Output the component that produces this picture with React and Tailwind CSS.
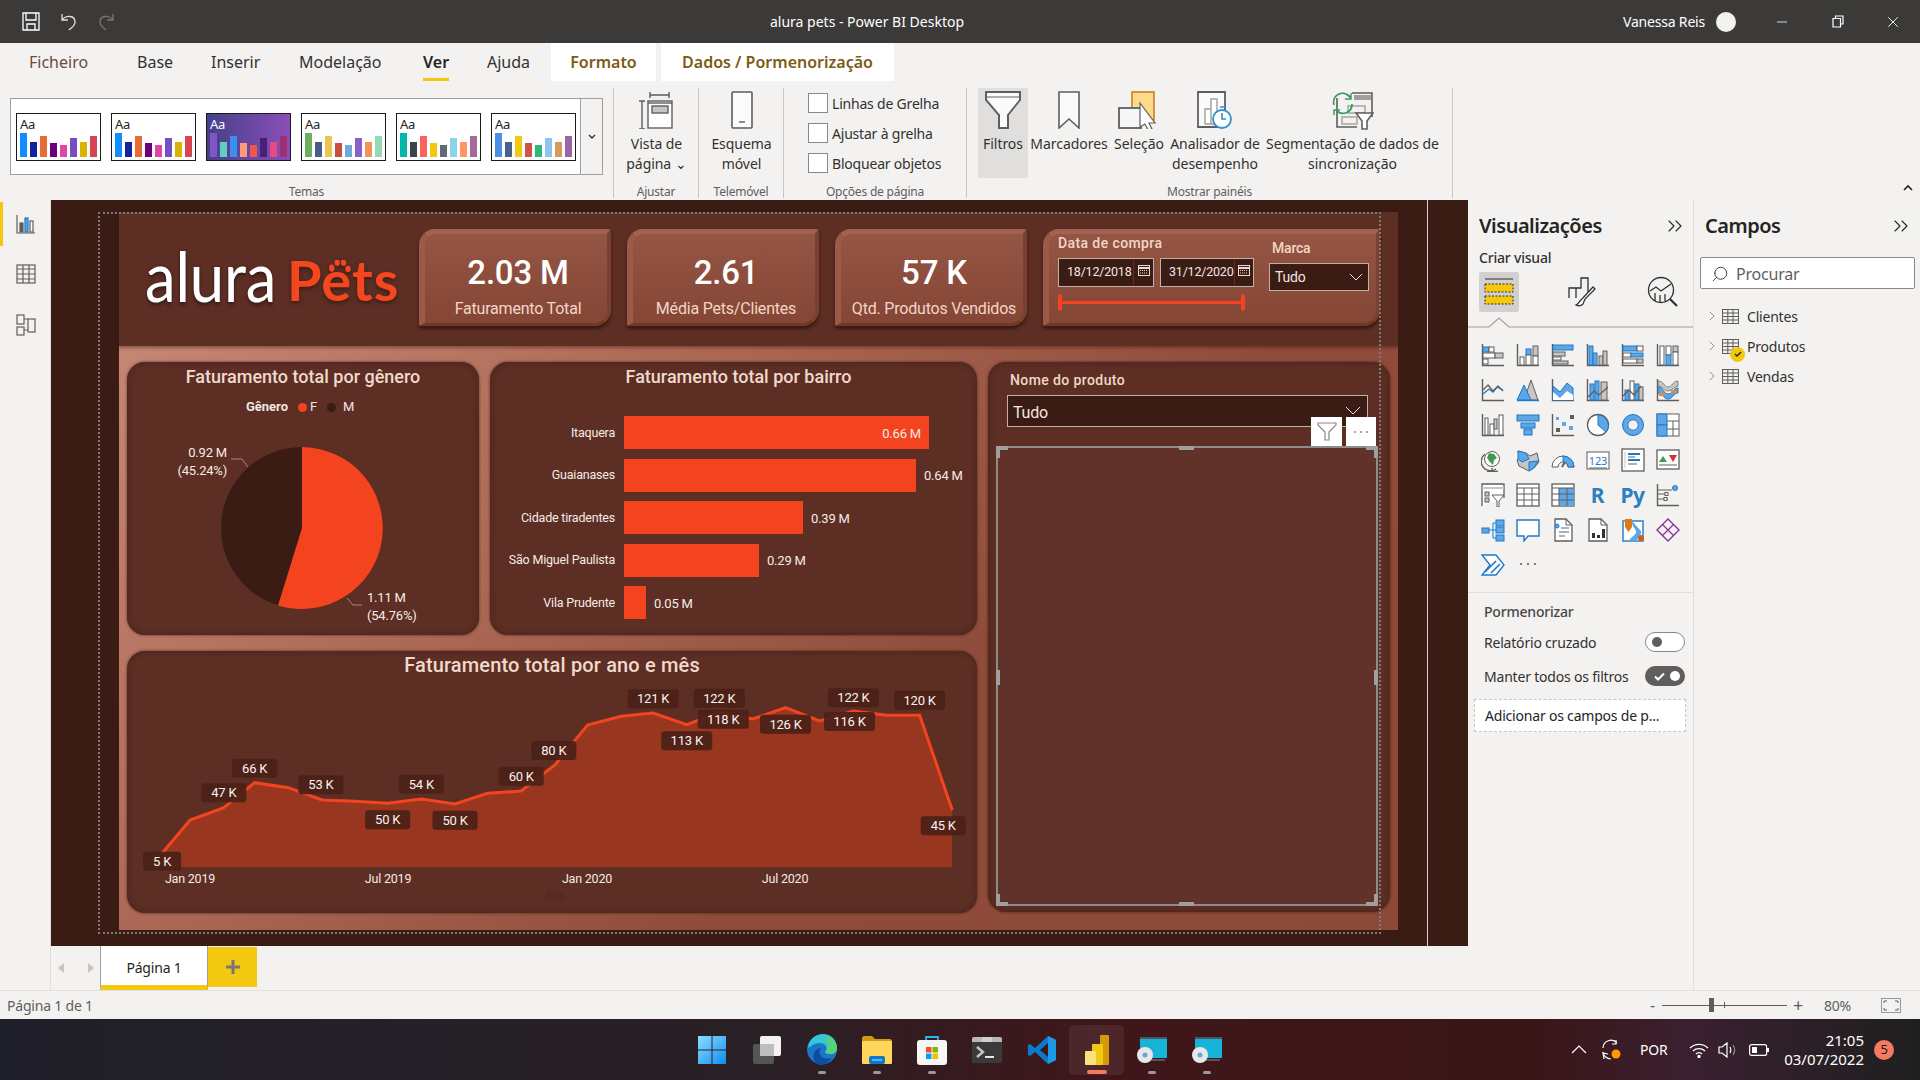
import { ChevronRight, ChevronsRight, Search, Minus, X } from 'lucide-react'

const G = '#605e5c'
const L = '#c8c6c4'
const B = '#5ea6e6'
const S = '#1f78c8'

const Ax = () => <path d="M1.5 1v21.5H23" stroke={G} strokeWidth="1.4" fill="none" />
const Bx = ({ x, y, w, h, f = B, s = S }) => <rect x={x} y={y} width={w} height={h} fill={f} stroke={s} strokeWidth="1" />

const vizIcons = [
    <><Ax /><Bx x={2} y={4} w={6} h={5} /><Bx x={8} y={4} w={5} h={5} f="#fff" s={G} /><Bx x={2} y={10} w={12} h={5} f="#fff" s={G} /><Bx x={14} y={10} w={8} h={5} f={L} s={G} /><Bx x={2} y={16} w={5} h={5} f="#fff" s={G} /></>,
    <><Ax /><Bx x={4} y={14} w={4} h={8} f="#fff" s={G} /><Bx x={10} y={6} w={5} h={6} f={B} /><Bx x={10} y={12} w={5} h={10} f="#fff" s={G} /><Bx x={17} y={3} w={5} h={10} f={L} s={G} /><Bx x={17} y={13} w={5} h={9} f="#fff" s={G} /></>,
    <><path d="M1.5 1v21.5H23" stroke={G} strokeWidth="1.4" fill="none" /><Bx x={2} y={2} w={20} h={5} /><Bx x={2} y={9} w={12} h={4} f={L} s={G} /><Bx x={2} y={14} w={8} h={3} f="#fff" s={G} /><Bx x={2} y={18} w={15} h={3} f={L} s={G} /></>,
    <><Ax /><Bx x={3} y={3} w={4} h={19} /><Bx x={7} y={10} w={4} h={12} /><Bx x={13} y={13} w={4} h={9} f={L} s={G} /><Bx x={17} y={8} w={4} h={14} f={L} s={G} /></>,
    <><Ax /><Bx x={2} y={3} w={14} h={5} /><Bx x={16} y={3} w={6} h={5} f="#fff" s={G} /><Bx x={2} y={10} w={8} h={4} f="#fff" s={G} /><Bx x={10} y={10} w={12} h={4} /><Bx x={2} y={16} w={14} h={4} f="#fff" s={G} /><Bx x={16} y={16} w={6} h={4} f={L} s={G} /></>,
    <><Ax /><Bx x={4} y={3} w={4} h={19} f="#fff" s={G} /><Bx x={10} y={3} w={5} h={9} f="#fff" s={G} /><Bx x={10} y={12} w={5} h={10} /><Bx x={17} y={3} w={5} h={6} f={L} s={G} /><Bx x={17} y={9} w={5} h={13} f="#fff" s={G} /></>,
    <><Ax /><path d="M2 16l6-5 4 3 5-6 5 5" stroke={S} fill="none" strokeWidth="1.3" /><path d="M2 12l5-5 5 6 4-4 6 3" stroke={G} fill="none" strokeWidth="1.3" /></>,
    <><path d="M15 2l7 20H8z" fill={L} stroke={G} /><path d="M8 7l7 15H1z" fill={B} stroke={S} /><path d="M1 22.5h22" stroke={S} strokeWidth="1.4" /></>,
    <><path d="M1.5 1v21.5H23" stroke={G} strokeWidth="1.4" fill="none" /><path d="M2 8l7 6 7-9 6 5v12H2z" fill={B} stroke={S} /><path d="M2 14l7 6 7-7 6 4v5H2z" fill="#fff" /></>,
    <><Ax /><Bx x={4} y={6} w={4} h={16} /><Bx x={9} y={3} w={4} h={19} /><Bx x={15} y={4} w={6} h={18} f={L} s={G} /><path d="M2 19l6-6 5 4 9-8" stroke={G} fill="none" strokeWidth="1.3" /></>,
    <><Ax /><Bx x={4} y={12} w={4} h={10} /><Bx x={9} y={3} w={4} h={19} f="#fff" s={G} /><Bx x={14} y={6} w={4} h={16} /><Bx x={18} y={9} w={4} h={13} f={L} s={G} /><path d="M2 18l6-6 5 5 7-9" stroke={G} fill="none" strokeWidth="1.3" /></>,
    <><Ax /><path d="M2 3c6 0 6 6 10 6s5-6 10-6v5c-4 0-5 5-10 5S8 8 2 8z" fill={L} stroke={G} strokeWidth=".7" /><path d="M2 9c6 0 5 7 10 7s5-6 10-6v5c-5 0-5 6-10 6S8 15 2 15z" fill={B} stroke={S} /><rect x="3" y="15" width="6" height="3" fill="#e8883a" /><rect x="15" y="12" width="6" height="3" fill="#e8883a" /></>,
    <><Ax /><Bx x={4} y={5} w={3} h={17} f="#fff" s={G} /><Bx x={9} y={11} w={4} h={11} f="#fff" s={G} /><Bx x={13} y={6} w={3} h={10} f={L} s={G} /><Bx x={18} y={2} w={4} h={20} f="#fff" s={G} /></>,
    <><Bx x={1} y={2} w={22} h={6} /><Bx x={5} y={10} w={14} h={5} /><Bx x={8} y={16} w={8} h={6} /></>,
    <><Ax /><rect x="5" y="4" width="3" height="3" fill={B} /><rect x="19" y="2" width="4" height="4" fill={G} /><rect x="11" y="9" width="4" height="4" fill={B} /><rect x="5" y="15" width="4" height="4" fill={G} /><rect x="18" y="13" width="4" height="4" fill={B} /></>,
    <><circle cx="12" cy="12" r="10.5" fill="#fff" stroke={G} strokeWidth="1.3" /><path d="M12 2a10.5 10.5 0 0 1 8 17l-8-7z" fill={B} stroke={S} /></>,
    <><circle cx="12" cy="12" r="8" fill="none" stroke={B} strokeWidth="5" /><circle cx="12" cy="12" r="10.5" fill="none" stroke={S} /><circle cx="12" cy="12" r="5.2" fill="none" stroke={S} /></>,
    <><rect x="1" y="1" width="22" height="22" fill="#fff" stroke={G} /><Bx x={1} y={1} w={10} h={11} /><Bx x={1} y={12} w={10} h={11} /><path d="M11 8h12M17 8v15M11 16h12" stroke={G} /></>,
    <><path d="M4 6a9 9 0 0 0 11 15" stroke={G} fill="none" strokeWidth="1.3" /><circle cx="11" cy="11" r="7.5" fill="#fff" stroke={G} /><path d="M8 5l5 1 3 4-3 2-1 5-3-3-3-4z" fill="#3f9b4e" /><path d="M11 20v3M6 23.5h11" stroke={G} strokeWidth="1.3" /></>,
    <><path d="M2 3l8 2 4 3 7-3 2 9-5 6-5 3-4-2-6-3-2-6 2-2z" fill={L} stroke={G} /><path d="M2 3l8 2 3 6-7 3-4-3z" fill={B} stroke={S} /><path d="M13 14l9-1-4 7-5 3z" fill={B} stroke={S} /></>,
    <><path d="M1 19a11 11 0 0 1 22 0h-6a5 5 0 0 0-10 0z" fill="#fff" stroke={G} /><path d="M12 8a11 11 0 0 1 11 11h-6a5 5 0 0 0-5-5z" fill={B} stroke={S} /><path d="M11 19l3-5" stroke={G} strokeWidth="2" /></>,
    <><rect x="1" y="4" width="22" height="17" fill="#fff" stroke={G} /><text x="12" y="17" textAnchor="middle" fontSize="11" fontFamily="Noto Sans" fill={S}>123</text><path d="M3 20h18" stroke={G} /></>,
    <><rect x="1" y="1" width="22" height="22" fill="#fff" stroke={G} strokeWidth="1.3" /><path d="M4 4v16" stroke={L} /><path d="M7 6h12M7 12h12" stroke={S} strokeWidth="2" /><path d="M7 9h7M7 16h9" stroke={G} /></>,
    <><rect x="1" y="2" width="22" height="19" fill="#fff" stroke={G} strokeWidth="1.3" /><path d="M3 14l4-6 4 6z" fill="#3f9b4e" /><path d="M13 7h8l-4 7z" fill="#d13438" /><path d="M3 17h18" stroke={G} /></>,
    <><path d="M1 23V1h22v14" fill="#fff" stroke={G} strokeWidth="1.3" /><path d="M1 5h22" stroke={L} strokeWidth="2" /><rect x="4" y="9" width="4" height="4" fill={L} stroke={G} /><rect x="4" y="15" width="4" height="4" fill={L} stroke={G} /><path d="M11 12h12l-5 6v6h-2v-6z" fill="#fff" stroke={G} /></>,
    <><rect x="1" y="1" width="22" height="22" fill="#fff" stroke={G} strokeWidth="1.3" /><path d="M1 5h22M1 11h22M1 17h22M8 5v18M16 5v18" stroke={G} /></>,
    <><rect x="1" y="1" width="22" height="22" fill="#fff" stroke={G} strokeWidth="1.3" /><rect x="8" y="5" width="15" height="18" fill={B} /><path d="M1 5h22M1 11h22M1 17h22M8 5v18M16 5v18" stroke={G} /></>,
    'R',
    'Py',
    <><Ax /><path d="M2 7h14M2 11h8M2 16h10" stroke={G} /><circle cx="19" cy="5" r="2.5" fill={B} stroke={S} /><rect x="9" y="9.5" width="3" height="3" fill="#fff" stroke={G} /><rect x="8" y="14.5" width="3" height="3" fill="#fff" stroke={G} /></>,
    <><Bx x={1} y={10} w={7} h={5} /><path d="M8 12h4M12 5v15M12 5h3M12 12h3M12 20h3" stroke={S} /><Bx x={15} y={2} w={8} h={6} /><Bx x={15} y={9} w={8} h={6} /><Bx x={15} y={17} w={8} h={6} /></>,
    <path d="M1 2h22v16H12l-4 5v-5H1z" fill="#fff" stroke={S} strokeWidth="1.4" />,
    <><path d="M4 1h11l6 6v16H4z" fill="#fff" stroke={G} strokeWidth="1.3" /><path d="M15 1v6h6" fill="none" stroke={G} /><circle cx="6" cy="8" r="2" fill={B} stroke={S} /><path d="M10 10h8" stroke={S} /><path d="M8 14h10M8 18h6" stroke={G} /></>,
    <><path d="M3 1h12l6 6v16H3z" fill="#fff" stroke={G} strokeWidth="1.3" /><path d="M15 1v6h6" fill="none" stroke={G} /><rect x="6" y="15" width="3" height="5" fill="#323130" /><rect x="11" y="17" width="3" height="3" fill="#323130" /><rect x="16" y="11" width="3" height="9" fill="#323130" /></>,
    <><rect x="2" y="3" width="20" height="20" fill="#fff" stroke={S} strokeWidth="1.4" /><path d="M11 3c0 7 3 6 4 10s-5 5-7 10h8c0-4 5-5 4-10" fill={B} /><path d="M4 1h7v8l-3.5 5L4 9z" fill="#e07a10" /><circle cx="20" cy="20" r="3" fill="#d95b1a" /></>,
    <><path d="M12 1l11 11-11 11L1 12z" fill="none" stroke="#8a2fa3" strokeWidth="1.4" /><path d="M6.500 6.500L17.500 17.500M17.500 6.500L6.500 17.500" stroke="#8a2fa3" strokeWidth="1.2" /></>,
    <><path d="M1 2h14l8 10-8 10H1l8-10z" fill="#fff" stroke={S} strokeWidth="1.4" /><path d="M4 19l11-11M10 20l9-9" stroke={S} strokeWidth="1.6" /></>,
    <g fill={G}><circle cx="5" cy="11" r="1.1" /><circle cx="12" cy="11" r="1.1" /><circle cx="19" cy="11" r="1.1" /></g>,
]

const themes = [
    { bg: 'bg-white', text: 'text-[#252423]', bars: ['#118dff', '#12239e', '#e66c37', '#6b007b', '#e044a7', '#744ec2', '#d9b300', '#d64550'] },
    { bg: 'bg-white', text: 'text-[#252423]', bars: ['#118dff', '#12239e', '#e66c37', '#6b007b', '#e044a7', '#744ec2', '#d9b300', '#d64550'] },
    { bg: 'bg-[linear-gradient(90deg,#45408a,#8a4fb8)]', text: 'text-white', bars: ['#7e57c2', '#5fcfc0', '#3a8ff0', '#ff9a7a', '#f0564a', '#4a1f7a', '#e84a80', '#a03070'] },
    { bg: 'bg-white', text: 'text-[#252423]', bars: ['#6bb05c', '#4a5a8a', '#eac54f', '#c94f3d', '#6fa8dc', '#8a60c8', '#f0945a', '#96d9b5'] },
    { bg: 'bg-white', text: 'text-[#252423]', bars: ['#01b8aa', '#374649', '#fd625e', '#f2c80f', '#5f6b6d', '#8ad4eb', '#fe9666', '#a66999'] },
    { bg: 'bg-white', text: 'text-[#252423]', bars: ['#4a90e2', '#4a5f8c', '#f2c811', '#d0524a', '#2eb67d', '#8fc3ef', '#d69a5a', '#9b64a8'] },
]
const barHeights = [24, 15, 21, 14, 12, 19, 15, 21]

const Swatch = ({ theme }) => (
    <div className={`w-[85px] h-[48px] border-[1.5px] border-[#1b1a19] px-[3px] pt-[2px] flex flex-col justify-between ${theme.bg}`}>
        <span className={`text-[13px] leading-[16px] ${theme.text}`}>Aa</span>
        <div className="flex items-end justify-between pb-[3px]">
            {theme.bars.map((c, i) => (
                <div key={i} className="w-[7px]" style={{ height: barHeights[i], background: c }} />
            ))}
        </div>
    </div>
)

const RibbonBtn = ({ w, icon, lines, active }) => (
    <div className={`flex flex-col items-center shrink-0 h-[90px] pt-[3px] ${w} ${active ? 'bg-[#e1dfdd]' : ''}`}>
        <div className="h-[38px] flex items-center justify-center">{icon}</div>
        <div className="text-[14px] leading-[20px] tracking-[-0.05px] text-[#323130] text-center whitespace-nowrap mt-[5px]">
            {lines.map(l => <div key={l}>{l}</div>)}
        </div>
    </div>
)

const Group = ({ w, label, children, last }) => (
    <div className={`flex flex-col shrink-0 h-[110px] ${w} ${last ? '' : 'border-r border-[#c8c6c4]'}`}>
        <div className="h-[90px] flex">{children}</div>
        <div className="h-[20px] text-[12px] leading-[28px] text-[#605e5c] text-center whitespace-nowrap">{label}</div>
    </div>
)

const Check = ({ label }) => (
    <div className="flex items-center gap-[4px] h-[20px]">
        <div className="w-[20px] h-[20px] bg-white border border-[#8a8886]" />
        <span className="text-[14px] text-[#323130] whitespace-nowrap">{label}</span>
    </div>
)

const Ribbon = () => (
    <div className="h-[157px] bg-[#f3f2f1] shrink-0">
        <div className="h-[38px] flex items-center text-[16px] text-[#323130] tracking-normal">
            <span className="ml-[29px] w-[108px] text-[#6b4a3a]">Ficheiro</span>
            <span className="w-[74px]">Base</span>
            <span className="w-[88px]">Inserir</span>
            <span className="w-[124px]">Modelação</span>
            <div className="relative w-[64px] h-[38px] flex items-center font-semibold text-[#252423]">
                Ver
                <div className="absolute left-0 bottom-0 w-[26px] h-[3px] bg-[#f2c811]" />
            </div>
            <span className="w-[64px]">Ajuda</span>
            <div className="w-[105px] h-[38px] bg-white flex items-center justify-center font-semibold text-[#7a5c14]">Formato</div>
            <div className="ml-[5px] w-[233px] h-[38px] bg-white flex items-center justify-center font-semibold text-[#7a5c14]">Dados / Pormenorização</div>
        </div>
        <div className="flex pt-[7px] relative">
            <Group w="w-[614px]" label="Temas">
                <div className="ml-[10px] mt-[10px] w-[593px] h-[77px] bg-white border border-[#a19f9d] flex items-center">
                    <div className="flex gap-[10px] pl-[5px] w-[570px]">
                        {themes.map((t, i) => <Swatch key={i} theme={t} />)}
                    </div>
                    <div className="w-[22px] h-full border-l border-[#a19f9d] flex items-center justify-center bg-[#f3f2f1] text-[#323130]">
                        <svg width="8" height="6" viewBox="0 0 8 6"><path d="M1 1l3 3 3-3" stroke="#323130" strokeWidth="1.4" fill="none" /></svg>
                    </div>
                </div>
            </Group>
            <Group w="w-[85px]" label="Ajustar">
                <RibbonBtn w="w-[85px]" lines={['Vista de', 'página ⌄']} icon={
                    <svg width="38" height="38" viewBox="0 0 38 38" fill="none" stroke="#605e5c" strokeWidth="1.4">
                        <path d="M12 1v6M31 1v6M12 4h19M1 10h6M1 38h6M4 10v28" />
                        <rect x="10" y="10" width="24" height="27" fill="#fff" />
                        <rect x="14" y="15" width="16" height="7" fill="#c8c6c4" />
                        <path d="M10 12h24" />
                    </svg>
                } />
            </Group>
            <Group w="w-[85px]" label="Telemóvel">
                <RibbonBtn w="w-[85px]" lines={['Esquema', 'móvel']} icon={
                    <svg width="24" height="38" viewBox="0 0 24 38" fill="none">
                        <rect x="2" y="1" width="20" height="36" rx="1" fill="#fbfbfb" stroke="#605e5c" strokeWidth="1.6" />
                        <path d="M9 31h6" stroke="#605e5c" strokeWidth="1.4" />
                    </svg>
                } />
            </Group>
            <Group w="w-[183px]" label="Opções de página">
                <div className="flex flex-col gap-[10px] pl-[24px] pt-[5px]">
                    <Check label="Linhas de Grelha" />
                    <Check label="Ajustar à grelha" />
                    <Check label="Bloquear objetos" />
                </div>
            </Group>
            <Group w="w-[486px]" label="Mostrar painéis">
                <div className="w-[11px]" />
                <RibbonBtn w="w-[50px]" active lines={['Filtros']} icon={
                    <svg width="36" height="38" viewBox="0 0 36 38" fill="#fafafa" stroke="#605e5c" strokeWidth="2"><path d="M1 1h34v8L23 24v13h-9V24L1 9z" /><path d="M2 6h32" strokeWidth="1" /></svg>
                } />
                <RibbonBtn w="w-[82px]" lines={['Marcadores']} icon={
                    <svg width="24" height="38" viewBox="0 0 24 38" fill="#fafafa" stroke="#605e5c" strokeWidth="1.6"><path d="M2 1h20v36l-10-9-10 9z" /></svg>
                } />
                <RibbonBtn w="w-[58px]" lines={['Seleção']} icon={
                    <svg width="42" height="38" viewBox="0 0 42 38">
                        <rect x="14" y="1" width="22" height="28" fill="#fdd98a" stroke="#c87f2a" strokeWidth="1.6" />
                        <rect x="1" y="17" width="22" height="20" fill="#f6f6f6" stroke="#605e5c" strokeWidth="1.8" />
                        <path d="M22 12l15 20-6 0 3 6-4 1-3-6-5 3z" fill="#fff" stroke="#605e5c" strokeWidth="1.2" />
                    </svg>
                } />
                <RibbonBtn w="w-[94px]" lines={['Analisador de', 'desempenho']} icon={
                    <svg width="36" height="38" viewBox="0 0 36 38">
                        <path d="M1 1h27v35H1z" fill="#fafafa" stroke="#605e5c" strokeWidth="1.8" />
                        <path d="M8 18h6v15H8zM14 8h6v25h-6z" fill="#fff" stroke="#a19f9d" strokeWidth="1.4" />
                        <circle cx="25" cy="28" r="9" fill="#fff" stroke="#2f8fd0" strokeWidth="1.8" />
                        <path d="M25 22v6h4M23 16h5" stroke="#2f8fd0" strokeWidth="1.6" fill="none" />
                    </svg>
                } />
                <RibbonBtn w="w-[181px]" lines={['Segmentação de dados de', 'sincronização']} icon={
                    <svg width="42" height="40" viewBox="0 0 42 40" fill="none">
                        <path d="M5 8v29h20" stroke="#605e5c" strokeWidth="1.6" />
                        <path d="M20 3h20v24" stroke="#605e5c" strokeWidth="1.6" />
                        <rect x="22" y="5" width="17" height="5" fill="#a19f9d" />
                        <rect x="16" y="16" width="17" height="7" stroke="#a19f9d" strokeWidth="1.4" />
                        <rect x="10" y="27" width="15" height="7" stroke="#a19f9d" strokeWidth="1.4" />
                        <path d="M2 15a9 9 0 0 1 15-9l2 2M20 14a9 9 0 0 1-15 7" stroke="#3a9a5b" strokeWidth="1.8" />
                        <path d="M19 3v6h-6M2 25v-5h6" stroke="#3a9a5b" strokeWidth="1.4" />
                        <path d="M24 23h17l-6 8v8h-5v-8z" fill="#fff" stroke="#605e5c" strokeWidth="1.6" />
                    </svg>
                } />
            </Group>
            <svg className="absolute right-[6px] top-[103px]" width="12" height="8" viewBox="0 0 12 8"><path d="M2 6l4-4 4 4" stroke="#252423" strokeWidth="1.6" fill="none" /></svg>
        </div>
    </div>
)

const TitleBar = () => (
    <div className="h-[43px] bg-[#3b3a39] flex items-center text-white text-[14px] tracking-normal shrink-0">
        <div className="ml-[22px] flex gap-[21px] items-center">
            <svg width="18" height="19" viewBox="0 0 18 19" fill="none" stroke="#fff" strokeWidth="1.3"><path d="M1 1h16v17H1zM4 1v7h10V1M5 18v-6h8v6" /></svg>
            <svg width="16" height="19" viewBox="0 0 16 19" fill="none" stroke="#e1dfdd" strokeWidth="1.3"><path d="M1 2v6h6M1 8c4-5 13-5 13 2 0 4-4 6-6 8" /></svg>
            <svg width="16" height="19" viewBox="0 0 16 19" fill="none" stroke="#797775" strokeWidth="1.3"><path d="M15 2v6H9M15 8C11 3 2 3 2 10c0 4 4 6 6 8" /></svg>
        </div>
        <div className="ml-[653px] w-[200px] text-center whitespace-nowrap">alura pets - Power BI Desktop</div>
        <div className="ml-auto flex items-center">
            <span className="tracking-[-0.2px]">Vanessa Reis</span>
            <div className="ml-[11px] w-[20px] h-[20px] rounded-full bg-[#f3f2f1]" />
            <div className="w-[56px] flex justify-center ml-[18px]"><Minus size={16} strokeWidth={1.2} /></div>
            <div className="w-[56px] flex justify-center">
                <svg width="12" height="13" viewBox="0 0 12 13" fill="none" stroke="#fff" strokeWidth="1.2"><path d="M1 3.5h7.5V12H1zM3.5 3.5V1H11v8H8.5" /></svg>
            </div>
            <div className="w-[54px] flex justify-center"><X size={18} strokeWidth={1.2} /></div>
        </div>
    </div>
)

const kpiCard = "rounded-tl-[16px] rounded-br-[16px] rounded-tr-[3px] rounded-bl-[2px] border-t-[5px] border-l-[6px] border-r-[4px] border-b-[3px] border-t-[#a46050] border-l-[#9c5a49] border-r-[#7c4030] border-b-[#6f3829] bg-[linear-gradient(180deg,#945544,#854636)] shadow-[0_3px_3px_rgba(30,10,5,0.55)]"

const Kpi = ({ value, label }) => (
    <div className={`w-[192px] h-[97px] shrink-0 flex flex-col items-center pt-[14px] pl-[4px] ${kpiCard}`}>
        <div className="text-[33px] leading-[50px] font-medium text-white">{value}</div>
        <div className="text-[16px] leading-[22px] text-[#f3d6c8] whitespace-nowrap">{label}</div>
    </div>
)

const CalIcon = () => (
    <svg width="12" height="12" viewBox="0 0 12 12" fill="none" stroke="#e8d8d0" strokeWidth="1"><rect x=".5" y="1.5" width="11" height="10" /><path d="M.5 4h11" strokeWidth="2" /><path d="M2 6.5h8M2 9h8" strokeDasharray="1 1" /></svg>
)

const DateBox = ({ value, w }) => (
    <div className={`h-[29px] bg-[#3a1c14] border border-[#c0b0a8] flex items-center justify-between text-[12.5px] text-[#f3e6e0] ${w}`}>
        <span className="pl-[8px]">{value}</span>
        <div className="w-[20px] h-full border-l border-[#5c2e24] flex justify-center pt-[5px]"><CalIcon /></div>
    </div>
)

const Slicer = () => (
    <div className={`w-[337px] h-[97px] shrink-0 flex pl-[9px] ${kpiCard}`}>
        <div className="w-[196px] -mt-[1px]">
            <div className="text-[14px] leading-[20px] font-medium text-[#f3d6c8] tracking-[0.4px]">Data de compra</div>
            <div className="flex gap-[6px] mt-[5px]">
                <DateBox value="18/12/2018" w="w-[96px]" />
                <DateBox value="31/12/2020" w="w-[94px]" />
            </div>
            <div className="relative mt-[14px] w-[187px] h-[3px] bg-[#f4441f]">
                <div className="absolute left-0 top-[-7px] w-[4px] h-[17px] rounded bg-[#f4441f]" />
                <div className="absolute right-0 top-[-7px] w-[4px] h-[17px] rounded bg-[#f4441f]" />
            </div>
        </div>
        <div className="ml-[15px] pt-[4px]">
            <div className="ml-[3px] text-[14px] leading-[20px] font-medium text-[#f3d6c8]">Marca</div>
            <div className="mt-[5px] w-[100px] h-[28px] bg-[#3a1c14] border border-[#c0b0a8] flex items-center justify-between px-[5px] text-[#f3e6e0] text-[14px]">
                Tudo
                <svg width="14" height="8" viewBox="0 0 14 8"><path d="M1 1l6 6 6-6" stroke="#f3e6e0" fill="none" /></svg>
            </div>
        </div>
    </div>
)

const Logo = () => (
    <div className="w-[300px] shrink-0 pl-[26px] pt-[13px] flex items-start">
        <div className="w-[142px] h-[100px] font-['Lato'] text-[70px] leading-[100px] text-white origin-left scale-x-[0.88] drop-shadow-[0_2px_2px_rgba(0,0,0,0.5)]">alura</div>
        <div className="relative mt-[5px] font-['Lato'] font-bold text-[56px] leading-[100px] text-[#f4471f] tracking-[1px] drop-shadow-[0_2px_2px_rgba(0,0,0,0.4)] whitespace-nowrap">
            Pets
            <svg className="absolute left-[39px] top-[30px]" width="26" height="18" viewBox="0 0 26 20" fill="#f4471f">
                <ellipse cx="5" cy="9" rx="3" ry="4" /><ellipse cx="11" cy="3" rx="3" ry="3.5" /><ellipse cx="18" cy="3" rx="3" ry="3.5" /><ellipse cx="23" cy="10" rx="3" ry="3.5" />
            </svg>
        </div>
    </div>
)

const panel = "bg-[#5c2e24] rounded-[18px] shadow-[0_0_3px_rgba(50,20,12,0.7),inset_0_0_6px_rgba(40,15,8,0.35)]"
const din = "font-['Roboto']"

const GenderPanel = () => (
    <div className={`w-[352px] h-[273px] flex flex-col ${panel}`}>
        <div className="h-[30px] text-[18px] leading-[30px] font-medium tracking-normal text-[#f1d9ce] text-center">Faturamento total por gênero</div>
        <div className="mt-[6px] flex items-center justify-center gap-[5px] text-[13px] leading-[18px] text-[#f3e6e0] pr-[6px]">
            <span className="font-bold tracking-normal mr-[5px]">Gênero</span>
            <span className="w-[9px] h-[9px] rounded-full bg-[#f4441f]" /><span className="-ml-[2px] mr-[5px]">F</span>
            <span className="w-[9px] h-[9px] rounded-full bg-[#3a1c14]" /><span className="ml-[2px]">M</span>
        </div>
        <svg className="flex-1" viewBox="127 416 352 219" width="352" height="219">
            <circle cx="302" cy="528" r="81" fill="#3a1c14" />
            <path d="M302 528V447A81 81 0 1 1 278 605.4Z" fill="#f4441f" />
            <path d="M231 459h11l6 8M347 598l6 7h9" stroke="#a08a80" fill="none" />
            <g fill="#f6ebe5" fontSize="13">
                <text x="227" y="457" textAnchor="end">0.92 M</text>
                <text x="227" y="475" textAnchor="end">(45.24%)</text>
                <text x="367" y="602">1.11 M</text>
                <text x="367" y="620">(54.76%)</text>
            </g>
        </svg>
    </div>
)

const bairros = [
    { name: 'Itaquera', w: 'w-[305px]', v: '0.66 M', inside: true },
    { name: 'Guaianases', w: 'w-[292px]', v: '0.64 M' },
    { name: 'Cidade tiradentes', w: 'w-[179px]', v: '0.39 M' },
    { name: 'São Miguel Paulista', w: 'w-[135px]', v: '0.29 M' },
    { name: 'Vila Prudente', w: 'w-[22px]', v: '0.05 M' },
]

const BairroPanel = () => (
    <div className={`w-[487px] h-[273px] ${panel}`}>
        <div className="h-[30px] text-[18px] leading-[30px] font-medium tracking-normal text-[#f1d9ce] text-center pl-[10px]">Faturamento total por bairro</div>
        <div className="flex flex-col gap-[9.5px] mt-[24px]">
            {bairros.map(b => (
                <div key={b.name} className="flex items-center h-[33px] text-[13px] text-[#f6ebe5]">
                    <div className="w-[125px] text-right text-[12.5px] pt-[1px] whitespace-nowrap">{b.name}</div>
                    <div className={`ml-[9px] h-[33px] bg-[#f4441f] flex items-center justify-end pr-[8px] pt-[2px] ${b.w}`}>
                        {b.inside && b.v}
                    </div>
                    {!b.inside && <span className="ml-[8px] pt-[2px]">{b.v}</span>}
                </div>
            ))}
        </div>
    </div>
)

const px = x => x / 1.782 + 120
const py = y => y / 3 + 640
const linePts = [[75, 640], [125, 540], [185, 503], [240, 428], [300, 443], [360, 480], [418, 484], [477, 490], [537, 477], [597, 492], [655, 460], [715, 453], [775, 375], [833, 255], [893, 229], [950, 219], [1010, 254], [1068, 217], [1128, 237], [1186, 203], [1247, 243], [1307, 213], [1366, 226], [1425, 226], [1483, 510]]
const lineStr = linePts.map(([x, y]) => `${px(x).toFixed(1)},${py(y).toFixed(1)}`).join(' ')
const areaStr = `${px(75).toFixed(1)},${py(681)} ${lineStr} ${px(1483).toFixed(1)},${py(681)}`
const dataLabels = [['5 K', 75, 662, 38], ['47 K', 185, 457, 45], ['66 K', 240, 383, 45], ['53 K', 358, 433, 45], ['50 K', 477, 538, 45], ['54 K', 537, 431, 45], ['50 K', 597, 539, 45], ['60 K', 715, 407, 45], ['80 K', 773, 330, 45], ['121 K', 950, 175, 51], ['113 K', 1010, 301, 51], ['122 K', 1068, 173, 51], ['118 K', 1075, 236, 51], ['126 K', 1186, 251, 51], ['122 K', 1307, 172, 51], ['116 K', 1300, 243, 51], ['120 K', 1425, 179, 51], ['45 K', 1467, 556, 45]]

const LinePanel = () => (
    <div className={`w-[850px] h-[262px] flex flex-col ${panel}`}>
        <div className="h-[28px] text-[20px] leading-[28px] font-medium tracking-[0.15px] text-[#f1d9ce] text-center">Faturamento total por ano e mês</div>
        <svg viewBox="127 679 850 234" width="850" height="234">
            <polygon points={areaStr} fill="#99361f" />
            <polyline points={lineStr} fill="none" stroke="#f4441f" strokeWidth="3" />
            {dataLabels.map(([t, x, y, w], i) => (
                <g key={i}>
                    <rect x={px(x) - w / 2} y={py(y) - 9} width={w} height="19" rx="3" fill="#4a2118" fillOpacity="0.92" />
                    <text x={px(x)} y={py(y) + 5} textAnchor="middle" fontSize="13" fill="#fbf3ee">{t}</text>
                </g>
            ))}
            <g fontSize="12.5" fill="#f6ebe5" textAnchor="middle">
                <text x="190" y="883">Jan 2019</text>
                <text x="388" y="883">Jul 2019</text>
                <text x="587" y="883">Jan 2020</text>
                <text x="785" y="883">Jul 2020</text>
            </g>
            <text x="555" y="900" fontSize="12" fill="#4a2a20" textAnchor="middle">Ano</text>
        </svg>
    </div>
)

const Handle = ({ className }) => <div className={`absolute bg-[#a19f9d] ${className}`} />

const ProductPanel = () => (
    <div className={`w-[402px] h-[550px] pt-[8px] flex flex-col relative ${panel}`}>
        <div className="ml-[22px] h-[20px] text-[14px] leading-[20px] font-medium text-[#f3d6c8] tracking-[0.4px]">Nome do produto</div>
        <div className="ml-[19px] mt-[5px] w-[361px] h-[32px] bg-[#3a1c14] border border-[#c0b0a8] flex items-center justify-between px-[5px] pt-[3px] text-[16px] text-[#f3e6e0]">
            Tudo
            <svg className="mr-[1px] mb-[5px]" width="16" height="9" viewBox="0 0 16 9"><path d="M1 1l7 7 7-7" stroke="#f3e6e0" fill="none" /></svg>
        </div>
        <div className="relative ml-[8px] mt-[19px] w-[382px] h-[460px] border-2 border-[#8f8b88] bg-[#603229]">
            <Handle className="-left-[2px] -top-[2px] w-[12px] h-[4px]" />
            <Handle className="-left-[2px] -top-[2px] w-[4px] h-[12px]" />
            <Handle className="-right-[2px] -top-[2px] w-[12px] h-[4px]" />
            <Handle className="-right-[2px] -top-[2px] w-[4px] h-[12px]" />
            <Handle className="-left-[2px] -bottom-[2px] w-[12px] h-[4px]" />
            <Handle className="-left-[2px] -bottom-[2px] w-[4px] h-[12px]" />
            <Handle className="-right-[2px] -bottom-[2px] w-[12px] h-[4px]" />
            <Handle className="-right-[2px] -bottom-[2px] w-[4px] h-[12px]" />
            <Handle className="left-[181px] -top-[2px] w-[15px] h-[4px]" />
            <Handle className="left-[181px] -bottom-[2px] w-[15px] h-[4px]" />
            <Handle className="-left-[2px] top-[222px] w-[4px] h-[15px]" />
            <Handle className="-right-[2px] top-[222px] w-[4px] h-[15px]" />
            <div className="absolute right-[0px] -top-[31px] flex gap-[4px]">
                <div className="w-[31px] h-[29px] bg-white flex items-center justify-center">
                    <svg width="20" height="19" viewBox="0 0 20 19" fill="none" stroke="#8a8886" strokeWidth="1.2"><path d="M1 1h18v2l-7 7v8H8v-8L1 3z" /></svg>
                </div>
                <div className="w-[30px] h-[29px] bg-white flex items-center justify-center gap-[4px]">
                    <span className="w-[2px] h-[2px] bg-[#8a8886] rounded-full" /><span className="w-[2px] h-[2px] bg-[#8a8886] rounded-full" /><span className="w-[2px] h-[2px] bg-[#8a8886] rounded-full" />
                </div>
            </div>
        </div>
    </div>
)

const ReportCanvas = () => (
    <div className="relative h-[746px] bg-[#3a1c14] pl-[68px] pt-[12px] overflow-hidden">
        <div className={`w-[1279px] h-[718px] bg-[linear-gradient(135deg,#cc8d7b_0%,#a96552_40%,#8f4c3a_65%,#8c4937_100%)] flex flex-col ${din}`}>
            <div className="h-[134px] bg-[#5c2e24] flex pt-[17px] gap-[16px] shadow-[0_2px_3px_rgba(50,20,12,0.4)]">
                <div className="-mt-[17px] -mr-[16px]"><Logo /></div>
                <Kpi value="2.03 M" label="Faturamento Total" />
                <Kpi value="2.61" label="Média Pets/Clientes" />
                <Kpi value="57 K" label="Qtd. Produtos Vendidos" />
                <Slicer />
            </div>
            <div className="flex gap-[11px] pl-[8px] pt-[16px]">
                <div className="flex flex-col gap-[16px]">
                    <div className="flex gap-[11px]">
                        <GenderPanel />
                        <BairroPanel />
                    </div>
                    <LinePanel />
                </div>
                <ProductPanel />
            </div>
        </div>
        <div className="absolute left-[47px] top-[12px] w-[1283px] h-[722px] border-2 border-dotted border-[#7d7a78] pointer-events-none" />
        <div className="absolute left-[1376px] top-0 w-px h-full bg-[#d8d0cc]" />
    </div>
)

const PageTabs = () => (
    <div className="h-[44px] bg-[#f3f2f1] flex items-center">
        <div className="w-[49px] flex justify-between pl-[7px] pr-[6px] gap-[15px] mr-[0px]">
            <svg width="6" height="10" viewBox="0 0 6 10" fill="#c8c6c4"><path d="M6 0v10L0 5z" /></svg>
            <svg width="6" height="10" viewBox="0 0 6 10" fill="#c8c6c4"><path d="M0 0v10l6-5z" /></svg>
        </div>
        <div className="h-[44px] w-[108px] pt-[3px] bg-white border-l border-r border-[#a19f9d] border-b-[5px] border-b-[#f2c811] flex items-center justify-center text-[14px] text-[#252423]">Página 1</div>
        <div className="h-[40px] w-[49px] bg-[#f2c811] flex items-center justify-center mt-[-2px]">
            <svg width="14" height="14" viewBox="0 0 14 14" fill="#797775"><path d="M5.5 0h3v5.500h5.500v3H8.500V14h-3V8.500H0v-3h5.500z" /></svg>
        </div>
    </div>
)

const LeftRail = () => (
    <div className="w-[51px] shrink-0 bg-[#f3f2f1] border-r border-[#e1dfdd] flex flex-col items-center pt-[14px] pl-[1px] gap-[30px] relative">
        <div className="absolute left-0 top-[2px] w-[3px] h-[44px] bg-[#f2c811]" />
        <svg width="20" height="20" viewBox="0 0 20 20" fill="none" stroke="#605e5c" strokeWidth="1.2"><path d="M1 1v18h18" /><rect x="4" y="9" width="3" height="9" fill="#605e5c" /><rect x="9" y="4" width="3" height="14" fill="#5ea6e6" stroke="#1f78c8" /><rect x="14" y="7" width="3" height="11" fill="#fff" /></svg>
        <svg width="20" height="20" viewBox="0 0 20 20" fill="none" stroke="#605e5c" strokeWidth="1.2"><rect x="1" y="1" width="18" height="18" /><path d="M1 5h18M1 10h18M1 15h18M7 1v18M13 1v18" /></svg>
        <svg width="20" height="22" viewBox="0 0 20 22" fill="none" stroke="#605e5c" strokeWidth="1.2"><rect x="1" y="1" width="7" height="9" /><rect x="1" y="13" width="7" height="8" /><rect x="12" y="5" width="7" height="13" /><path d="M8 5h4M8 16h4" /></svg>
    </div>
)

const TableIcon = () => (
    <svg width="17" height="15" viewBox="0 0 17 15" fill="none" stroke="#605e5c"><rect x=".5" y=".5" width="16" height="14" /><path d="M.5 4h16M.5 7.500h16M.5 11h16M5.800 .5v14M11 .5v14" /></svg>
)

const Tree = ({ label, badge }) => (
    <div className="flex items-center h-[30px] text-[14px] text-[#323130] relative">
        <ChevronRight size={16} strokeWidth={1} className="ml-[10px] text-[#605e5c]" />
        <div className="ml-[2px] relative"><TableIcon />
            {badge && (
                <div className="absolute left-[8px] top-[8px] w-[15px] h-[15px] rounded-full bg-[#f2c811] flex items-center justify-center">
                    <svg width="8" height="6" viewBox="0 0 8 6"><path d="M1 3l2 2 4-4" stroke="#252423" strokeWidth="1.4" fill="none" /></svg>
                </div>
            )}
        </div>
        <span className="ml-[8px]">{label}</span>
    </div>
)

const Toggle = ({ on }) => on ? (
    <div className="w-[40px] h-[20px] rounded-full bg-[#605e5c] flex items-center justify-end gap-[5px] pr-[5px]">
        <svg width="11" height="9" viewBox="0 0 11 9"><path d="M1 4.500l3 3 6-6" stroke="#fff" strokeWidth="2" fill="none" /></svg>
        <span className="w-[10px] h-[10px] rounded-full bg-white" />
    </div>
) : (
    <div className="w-[40px] h-[20px] rounded-full bg-white border border-[#8a8886] flex items-center pl-[6px]">
        <span className="w-[10px] h-[10px] rounded-full bg-[#605e5c]" />
    </div>
)

const VizPane = () => (
    <div className="w-[226px] shrink-0 border-r border-[#e1dfdd] bg-[#f3f2f1] relative">
        <div className="flex items-center justify-between pl-[11px] pr-[6px] h-[50px] pt-[2px]">
            <span className="text-[20px] font-semibold tracking-[-0.5px] text-[#252423]">Visualizações</span>
            <ChevronsRight size={24} strokeWidth={1.1} className="text-[#252423]" />
        </div>
        <div className="pl-[11px] text-[14px] leading-[20px] font-medium text-[#323130] -mt-[2px]">Criar visual</div>
        <div className="flex pl-[11px] items-center mt-[4px] h-[40px]">
            <div className="w-[40px] h-[40px] bg-[#d2d0ce] rounded-[2px] flex items-center justify-center">
                <svg width="30" height="30" viewBox="0 0 30 30">
                    <path d="M1 2h28" stroke="#323130" strokeWidth="1" />
                    <rect x="1" y="7" width="28" height="8" fill="#f2c811" stroke="#323130" strokeDasharray="2 1.500" />
                    <rect x="1" y="19" width="28" height="8" fill="#f2c811" stroke="#323130" strokeDasharray="2 1.500" />
                </svg>
            </div>
            <svg className="ml-[48px]" width="30" height="32" viewBox="0 0 30 32" fill="none" stroke="#323130" strokeWidth="1.300">
                <path d="M9 22V12h5V2h7v14M2 22V12h7" />
                <path d="M28 13l-10 10-2 5c-2 2-5 2-7 1 3-1 3-4 6-6l11-12z" fill="#fff" />
            </svg>
            <svg className="ml-[50px]" width="32" height="32" viewBox="0 0 32 32" fill="none" stroke="#323130" strokeWidth="1.300">
                <circle cx="14" cy="14" r="12.500" />
                <path d="M3 15l6-4 5 4 10-7" />
                <path d="M8 17v8M13 19v7M18 18v7" />
                <path d="M23 23l7 7" strokeWidth="2.200" />
            </svg>
        </div>
        <svg className="mt-[5px] block" width="225" height="11" viewBox="0 0 225 11" fill="none">
            <path d="M0 10h21l10-9 10 9h184" stroke="#a19f9d" strokeWidth="1.200" />
        </svg>
        <div className="grid grid-cols-[repeat(6,35px)] auto-rows-[35px] pl-[7px] mt-[9px]">
            {vizIcons.map((icon, i) => (
                <div key={i} className="flex items-center justify-center">
                    {typeof icon === 'string'
                        ? <span className="text-[21px] leading-[24px] font-bold tracking-[-0.5px] text-[#2a80c0]">{icon}</span>
                        : <svg width="24" height="24" viewBox="0 0 24 24">{icon}</svg>}
                </div>
            ))}
        </div>
        <div className="mt-[10px] pt-[8px] border-t border-[#e1dfdd] pl-[16px] pr-[8px] text-[14px] text-[#323130]">
            <div className="h-[22px] leading-[22px] font-medium text-[#484644]">Pormenorizar</div>
            <div className="flex items-center justify-between mt-[7px] h-[24px]">Relatório cruzado <Toggle /></div>
            <div className="flex items-center justify-between mt-[10px] h-[24px]">Manter todos os filtros <Toggle on /></div>
        </div>
        <div className="ml-[6px] mt-[11px] w-[212px] h-[33px] bg-white border border-dashed border-[#c8c6c4] flex items-center pl-[10px] text-[14px] text-[#252423] whitespace-nowrap">Adicionar os campos de p...</div>
    </div>
)

const FieldsPane = () => (
    <div className="w-[226px] shrink-0 bg-[#f3f2f1]">
        <div className="flex items-center justify-between pl-[11px] pr-[7px] h-[50px] pt-[2px]">
            <span className="text-[20px] font-semibold tracking-[-0.5px] text-[#252423]">Campos</span>
            <ChevronsRight size={24} strokeWidth={1.1} className="text-[#252423]" />
        </div>
        <div className="ml-[6px] mt-[7px] w-[215px] h-[32px] bg-white border border-[#8a8886] rounded-[2px] flex items-center pl-[10px] pt-[1px] gap-[7px] text-[16px] text-[#605e5c]">
            <Search size={18} strokeWidth={1.2} className="text-[#323130] -scale-x-100" /> Procurar
        </div>
        <div className="mt-[12px]">
            <Tree label="Clientes" />
            <Tree label="Produtos" badge />
            <Tree label="Vendas" />
        </div>
    </div>
)

const StatusBar = () => (
    <div className="h-[29px] shrink-0 bg-[#f3f2f1] border-t border-[#e1dfdd] flex items-center text-[14px] text-[#605e5c] relative">
        <span className="ml-[7px]">Página 1 de 1</span>
        <div className="ml-auto flex items-center">
            <span className="text-[16px]">-</span>
            <div className="relative ml-[7px] w-[125px] h-px bg-[#605e5c]">
                <div className="absolute left-[47px] -top-[7px] w-[5px] h-[14px] bg-[#605e5c]" />
                <div className="absolute left-[62px] -top-[3px] w-px h-[6px] bg-[#605e5c]" />
            </div>
            <span className="ml-[6px] text-[18px] leading-[18px]">+</span>
            <span className="ml-[21px] w-[27px] text-[14px]">80%</span>
            <svg className="ml-[30px] mr-[19px]" width="20" height="15" viewBox="0 0 20 15" fill="none">
                <rect x=".5" y=".5" width="19" height="14" stroke="#8a9ab0" />
                <path d="M3 5V3h3M14 3h3v2M17 10v2h-3M6 12H3v-2" stroke="#605e5c" />
            </svg>
        </div>
    </div>
)

const tbIcons = [
    <svg width="30" height="30" viewBox="0 0 30 30">
        <defs><linearGradient id="win" x1="0" y1="0" x2="1" y2="1"><stop offset="0" stopColor="#8de0ff" /><stop offset="1" stopColor="#0f8cf0" /></linearGradient></defs>
        <path d="M1 1h13.500v13.500H1zM15.500 1H29v13.500H15.500zM1 15.500h13.500V29H1zM15.500 15.500H29V29H15.500z" fill="url(#win)" />
    </svg>,
    <svg width="30" height="30" viewBox="0 0 30 30">
        <rect x="1" y="9" width="21" height="20" rx="2" fill="#555" />
        <rect x="8" y="1" width="21" height="20" rx="2" fill="#f2f2f2" />
        <rect x="8" y="9" width="14" height="12" fill="#bdbdbd" />
    </svg>,
    <svg width="30" height="31" viewBox="0 0 30 31">
        <circle cx="15" cy="15.500" r="15" fill="#1b76c6" />
        <path d="M1 14C2 5 9 0 16 0c8 0 14 6 14 14 0 4-3 6-7 6-3 0-5-1-5-2 3-2 2-9-5-9-7 0-11 5-12 5z" fill="#38c5d8" />
        <path d="M18 2c7 1 12 6 12 12 0 4-3 6-7 6-2 0-4-1-5-2 4-2 3-7 2-9z" fill="#58d27a" />
        <path d="M12 31C7 28 5 24 7 19c1-3 4-5 7-5-2 2-2 6 1 9 2 2 7 2 10 1-3 4-8 8-13 7z" fill="#0d4f9e" />
    </svg>,
    <svg width="30" height="28" viewBox="0 0 30 28">
        <path d="M0 3c0-2 1-3 2-3h8l3 3h15c1 0 2 1 2 2v3H0z" fill="#d19a10" />
        <rect y="5" width="30" height="23" rx="1" fill="#ffd65c" />
        <rect x="7" y="20" width="16" height="8" rx="2" fill="#1177cc" />
        <path d="M10 24h10" stroke="#7cc4f5" strokeWidth="1.500" />
    </svg>,
    <svg width="30" height="30" viewBox="0 0 30 30">
        <path d="M9 6V2h12v4" fill="none" stroke="#28b8f0" strokeWidth="1.800" />
        <rect y="5" width="30" height="25" rx="3" fill="#f6f6f6" />
        <rect x="9" y="12" width="5.500" height="5.500" fill="#f25022" /><rect x="15.500" y="12" width="5.500" height="5.500" fill="#7fba00" />
        <rect x="9" y="18.500" width="5.500" height="5.500" fill="#00a4ef" /><rect x="15.500" y="18.500" width="5.500" height="5.500" fill="#ffb900" />
    </svg>,
    <svg width="30" height="26" viewBox="0 0 30 26">
        <rect width="30" height="26" rx="2" fill="#3a3a3a" />
        <path d="M0 2a2 2 0 0 1 2-2h26a2 2 0 0 1 2 2v3H0z" fill="#b8b8b8" />
        <path d="M10 0h10v5H10z" fill="#d0d0d0" />
        <path d="M5 10l6 5-6 5" stroke="#c8c8c8" strokeWidth="2.400" fill="none" />
        <path d="M13 20h9" stroke="#e8e8e8" strokeWidth="2" />
    </svg>,
    <svg width="30" height="30" viewBox="0 0 30 30">
        <path d="M21 1l8 4v20l-8 4-13-12-5 4-2-1V10l2-1 5 4zM21 8l-8 7 8 7z" fill="#0a7bcc" />
        <path d="M21 1l8 4v20l-8 4z" fill="#1c9ae6" />
    </svg>,
    <svg width="24" height="30" viewBox="0 0 24 30">
        <rect x="15" width="9" height="30" rx="1" fill="#d39a0a" />
        <rect x="7" y="9" width="11" height="21" rx="1" fill="#f2c811" />
        <rect y="16" width="11" height="14" rx="1" fill="#f8e27a" />
    </svg>,
    <svg width="30" height="30" viewBox="0 0 30 30">
        <rect x="3" y="2" width="27" height="21" fill="#18b4d8" /><rect x="3" y="2" width="27" height="2" fill="#4a5560" />
        <path d="M12 25h16" stroke="#555" strokeWidth="2" />
        <circle cx="8" cy="20" r="8" fill="#e8e8e8" /><circle cx="8" cy="20" r="2.500" fill="#6aa5d8" />
    </svg>,
    <svg width="30" height="30" viewBox="0 0 30 30">
        <rect x="3" y="2" width="27" height="21" fill="#18b4d8" /><rect x="3" y="2" width="27" height="2" fill="#4a5560" />
        <path d="M12 25h16" stroke="#555" strokeWidth="2" />
        <circle cx="8" cy="20" r="8" fill="#e8e8e8" /><circle cx="8" cy="20" r="2.500" fill="#6aa5d8" />
    </svg>,
]
const tbDots = [false, false, true, true, true, false, false, false, true, true]

const Taskbar = () => (
    <div className="h-[61px] shrink-0 bg-[linear-gradient(90deg,#20202a_0%,#2a2026_40%,#40161a_58%,#3a1618_80%,#3a2030_88%,#1f1f1f_100%)] flex items-center pl-[684px] text-white">
        {tbIcons.map((icon, i) => (
            <div key={i} className={`relative w-[55px] h-[50px] flex items-center justify-center ${i === 7 ? 'bg-[rgba(255,255,255,0.07)] rounded-[5px]' : ''}`}>
                {icon}
                {tbDots[i] && <div className="absolute bottom-[1px] w-[8px] h-[3px] rounded-full bg-[#9a9a9a]" />}
                {i === 7 && <div className="absolute bottom-[1px] w-[20px] h-[4px] rounded-full bg-[#f47b61]" />}
            </div>
        ))}
        <div className="ml-[337px] flex items-center">
            <svg width="16" height="9" viewBox="0 0 16 9"><path d="M1 8l7-7 7 7" stroke="#fff" strokeWidth="1.200" fill="none" /></svg>
            <svg className="ml-[14px]" width="21" height="21" viewBox="0 0 21 21" fill="none" stroke="#fff" strokeWidth="1.200">
                <path d="M2 9a8 8 0 0 1 14-5M15 1v4h-4M2 13a8 8 0 0 0 8 7M3 20l-1-6 5 1" />
                <circle cx="15" cy="15" r="4.500" fill="#ff9800" stroke="none" />
            </svg>
            <span className="ml-[18px] w-[30px] text-[14px]">POR</span>
            <svg className="ml-[19px]" width="20" height="16" viewBox="0 0 20 16" fill="none" stroke="#fff" strokeWidth="1.300">
                <path d="M1 6a13 13 0 0 1 18 0M4 9a9 9 0 0 1 12 0M7 12a4 4 0 0 1 6 0" /><circle cx="10" cy="14.500" r="1" fill="#fff" />
            </svg>
            <svg className="ml-[9px]" width="20" height="16" viewBox="0 0 20 16" fill="none" stroke="#fff" strokeWidth="1.200">
                <path d="M1 5h3l5-4v14l-5-4H1zM12 5c1 2 1 4 0 6" /><path d="M15 3c2 3 2 7 0 10" stroke="#9a8888" />
            </svg>
            <svg className="ml-[11px]" width="21" height="12" viewBox="0 0 21 12" fill="none" stroke="#fff" strokeWidth="1.200">
                <rect x=".6" y=".6" width="17" height="10.800" rx="2" /><rect x="3" y="3" width="5" height="6" fill="#fff" stroke="none" /><path d="M19 4v4" strokeWidth="2" />
            </svg>
            <div className="ml-[7px] w-[87px] text-right text-[15px] leading-[19px] tracking-normal">
                <div>21:05</div>
                <div>03/07/2022</div>
            </div>
            <div className="ml-[10px] w-[20px] h-[20px] rounded-full bg-[#f47b61] text-[#1b1a19] text-[13px] flex items-center justify-center">5</div>
        </div>
    </div>
)

const App = () => (
    <div className="w-[1920px] h-[1080px] flex flex-col overflow-hidden font-['Noto_Sans',sans-serif] tracking-[-0.2px] bg-[#f3f2f1]">
        <TitleBar />
        <Ribbon />
        <div className="h-[790px] shrink-0 flex">
            <LeftRail />
            <div className="w-[1417px] shrink-0 flex flex-col">
                <ReportCanvas />
                <PageTabs />
            </div>
            <VizPane />
            <FieldsPane />
        </div>
        <StatusBar />
        <Taskbar />
    </div>
)

export default App
